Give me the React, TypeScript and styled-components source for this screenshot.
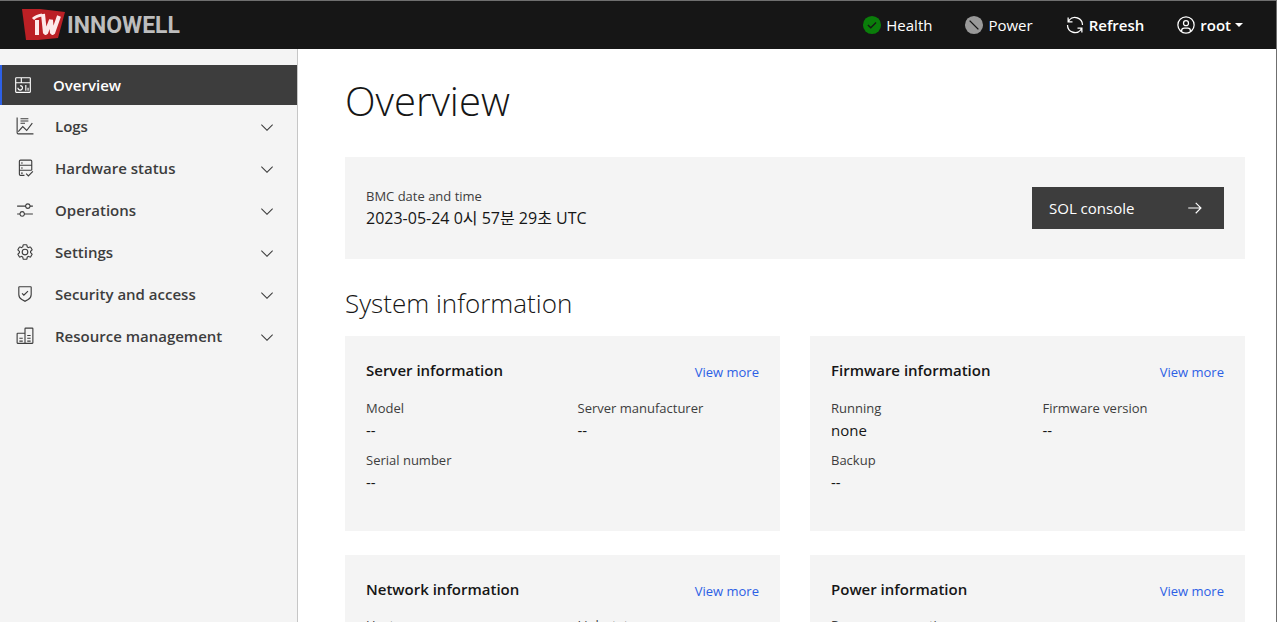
import React from "react";
import styled, { createGlobalStyle, css } from "styled-components";

const GlobalStyle = createGlobalStyle`
  *, *::before, *::after { box-sizing: border-box; }
  html, body, #root { height: 100%; }
  body {
    margin: 0;
    background: #ffffff;
    color: #161616;
    font-family: "Open Sans", "Noto Sans CJK KR", sans-serif;
    font-size: 15px;
    line-height: 22px;
  }
  h1, h2, h3, ul, dl, dd { margin: 0; padding: 0; }
  button { font: inherit; border: 0; cursor: pointer; }
  a { text-decoration: none; }
`;

const Shell = styled.div`
  display: flex;
  flex-direction: column;
  height: 100vh;
  border-top: 1px solid #6f6f6f;
`;

const Header = styled.header`
  display: flex;
  align-items: center;
  justify-content: space-between;
  flex: none;
  height: 48px;
  padding: 0 33px 0 22px;
  background: #161616;
  border-right: 1px solid #6f6f6f;
`;

const Brand = styled.a`
  display: flex;
`;

const HeaderActions = styled.div`
  display: flex;
  align-items: center;
  gap: 32px;
`;

const HeaderButton = styled.button<{ $strong?: boolean }>`
  display: flex;
  align-items: center;
  gap: 4px;
  padding: 0;
  background: none;
  color: #ffffff;
  font-weight: ${(p) => (p.$strong ? 600 : 400)};
`;

const Caret = styled.span`
  border: 4px solid transparent;
  border-top-color: #ffffff;
  border-bottom: 0;
`;

const Body = styled.div`
  display: flex;
  flex: 1;
  min-height: 0;
`;

const Sidebar = styled.nav`
  flex: none;
  width: 298px;
  padding-top: 16px;
  background: #f4f4f4;
  border-right: 1px solid #c6c6c6;
`;

const NavList = styled.ul`
  list-style: none;
`;

const navRow = css`
  display: flex;
  align-items: center;
  gap: 21px;
  width: 100%;
  font-weight: 600;
  text-align: left;
`;

const NavLink = styled.a`
  ${navRow}
  height: 40px;
  padding: 0 24px 0 12px;
  background: #3d3d3d;
  border-left: 2px solid #2d60e5;
  color: #ffffff;
`;

const NavToggle = styled.button`
  ${navRow}
  height: 42px;
  padding: 0 22px 0 16px;
  background: none;
  color: #3d3d3d;
`;

const NavLabel = styled.span`
  flex: 1;
`;

const Main = styled.main`
  flex: 1;
  min-width: 0;
  padding: 27px 31px 24px 47px;
  overflow-y: auto;
  scrollbar-width: none;
  border-right: 1px solid #6f6f6f;
`;

const PageTitle = styled.h1`
  margin-bottom: 31px;
  font-size: 40px;
  line-height: 50px;
  font-weight: 300;
`;

const SectionTitle = styled.h2`
  margin: 27px 0 15px;
  font-size: 26px;
  line-height: 35px;
  font-weight: 300;
`;

const Banner = styled.section`
  display: flex;
  align-items: center;
  justify-content: space-between;
  min-height: 102px;
  padding: 28px 21px;
  background: #f4f4f4;
`;

const BannerDetails = styled.dl`
  padding-bottom: 2px;
`;

const ConsoleButton = styled.button`
  display: flex;
  align-items: center;
  justify-content: space-between;
  width: 192px;
  height: 42px;
  padding: 0 20px 0 17px;
  background: #3d3d3d;
  color: #ffffff;
`;

const CardGrid = styled.div`
  display: grid;
  grid-template-columns: 1fr 1fr;
  gap: 24px 30px;
`;

const Card = styled.section`
  min-height: 195px;
  padding: 22px 21px;
  background: #f4f4f4;
`;

const CardHeader = styled.div<{ $tight?: boolean }>`
  display: flex;
  align-items: flex-start;
  justify-content: space-between;
  margin-bottom: ${(p) => (p.$tight ? 12 : 14)}px;
`;

const CardTitle = styled.h3`
  font-size: 15px;
  line-height: 24px;
  font-weight: 600;
`;

const MoreLink = styled.a`
  padding-top: 3px;
  color: #2d60e5;
  font-size: 13px;
`;

const Details = styled.dl`
  display: grid;
  grid-template-columns: 1fr 1fr;
  gap: 8px 30px;
`;

const Term = styled.dt`
  color: #3d3d3d;
  font-size: 13px;
`;

const Value = styled.dd<{ $large?: boolean }>`
  color: #161616;
  font-size: ${(p) => (p.$large ? 16 : 15)}px;
`;

type IconProps = { size?: number; children: React.ReactNode };

const Icon = ({ size = 18, children }: IconProps) => (
  <svg width={size} height={size} viewBox="0 0 32 32" fill="currentColor" aria-hidden="true">
    {children}
  </svg>
);

const strokeProps = { fill: "none", stroke: "currentColor", strokeWidth: 2 };

const OverviewIcon = () => (
  <Icon>
    <path d="M24 21h2v5h-2zM20 16h2v10h-2zM11 26a5 5 0 0 1-5-5h2a3 3 0 1 0 3-3v-2a5 5 0 0 1 0 10z" />
    <path d="M28 2H4a2 2 0 0 0-2 2v24a2 2 0 0 0 2 2h24a2 2 0 0 0 2-2V4a2 2 0 0 0-2-2zm0 9H14V4h14zM12 4v7H4V4zM4 28V13h24v15z" />
  </Icon>
);

const LogsIcon = () => (
  <Icon>
    <path d="M2 1v27a2 2 0 0 0 2 2h27M4 26l8-9 7 7 10-13" {...strokeProps} />
    <path d="M8 3h14M8 7h14M8 11h8" {...strokeProps} />
  </Icon>
);

const HardwareIcon = () => (
  <Icon>
    <path d="M15 29H8a2 2 0 0 1-2-2V4a2 2 0 0 1 2-2h18a2 2 0 0 1 2 2v16M6 11h22M6 20h22M18 26l4 4 8-8" {...strokeProps} />
    <path d="M9 6h3v2H9zM9 15h3v2H9zM9 24h3v2H9z" />
  </Icon>
);

const OperationsIcon = () => (
  <Icon>
    <path d="M30 8h-4.1a5 5 0 0 0-9.8 0H2v2h14.1a5 5 0 0 0 9.8 0H30zM21 12a3 3 0 1 1 0-6 3 3 0 0 1 0 6zM2 24h4.1a5 5 0 0 0 9.8 0H30v-2H15.900a5 5 0 0 0-9.8 0H2zM11 20a3 3 0 1 1 0 6 3 3 0 0 1 0-6z" />
  </Icon>
);

const SettingsIcon = () => (
  <Icon>
    <path d="M27,16.76c0-.25,0-.5,0-.76s0-.51,0-.77l1.92-1.68A2,2,0,0,0,29.3,11L26.94,7a2,2,0,0,0-1.73-1,2,2,0,0,0-.64.1l-2.43.82a11.35,11.35,0,0,0-1.31-.75l-.51-2.52a2,2,0,0,0-2-1.61H13.64a2,2,0,0,0-2,1.61l-.51,2.52a11.48,11.48,0,0,0-1.32.75L7.43,6.06A2,2,0,0,0,6.79,6,2,2,0,0,0,5.06,7L2.7,11a2,2,0,0,0,.41,2.51L5,15.24c0,.25,0,.5,0,.76s0,.51,0,.77L3.11,18.45A2,2,0,0,0,2.7,21L5.06,25a2,2,0,0,0,1.73,1,2,2,0,0,0,.64-.1l2.43-.82a11.35,11.35,0,0,0,1.31.75l.51,2.52a2,2,0,0,0,2,1.61h4.72a2,2,0,0,0,2-1.61l.51-2.52a11.48,11.48,0,0,0,1.32-.75l2.42.82a2,2,0,0,0,.64.1,2,2,0,0,0,1.73-1L29.3,21a2,2,0,0,0-.41-2.51ZM25.21,24l-3.43-1.16a8.86,8.86,0,0,1-2.71,1.57L18.36,28H13.64l-.71-3.55a9.36,9.36,0,0,1-2.7-1.57L6.79,24,4.43,20l2.72-2.4a8.9,8.9,0,0,1,0-3.13L4.43,12,6.79,8l3.43,1.16a8.86,8.86,0,0,1,2.71-1.57L13.64,4h4.72l.71,3.55a9.36,9.36,0,0,1,2.7,1.57L25.21,8,27.57,12l-2.72,2.4a8.9,8.9,0,0,1,0,3.13L27.57,20Z" />
    <circle cx="16" cy="16" r="5" {...strokeProps} />
  </Icon>
);

const SecurityIcon = () => (
  <Icon>
    <path d="M14 16.590L11.410 14 10 15.410l4 4 8-8L20.590 10z" />
    <path d="M16 30l-6.176-3.293A11 11 0 0 1 4 17V4a2 2 0 0 1 2-2h20a2 2 0 0 1 2 2v13a11 11 0 0 1-5.824 9.707zM6 4v13a9 9 0 0 0 4.766 7.942L16 27.733l5.234-2.791A9 9 0 0 0 26 17V4z" />
  </Icon>
);

const ResourceIcon = () => (
  <Icon>
    <path d="M16 29H3a1 1 0 0 1-1-1V12a1 1 0 0 1 1-1h13M16 29V3a1 1 0 0 1 1-1h12a1 1 0 0 1 1 1v25a1 1 0 0 1-1 1z" {...strokeProps} />
    <path d="M6 20h6M6 25h6M20 15h6M20 20h6M20 25h6" {...strokeProps} />
  </Icon>
);

const ChevronIcon = () => (
  <svg width="16" height="16" viewBox="0 0 16 16" fill="currentColor" aria-hidden="true">
    <path d="M8 13L2 7l.7-.7L8 11.600l5.300-5.300.7.7z" />
  </svg>
);

const HealthIcon = () => (
  <Icon size={20}>
    <circle cx="16" cy="16" r="14.500" fill="#0a7d0a" />
    <path d="M9.500 16l4.500 4.500 8.500-8.500" fill="none" stroke="#161616" strokeWidth="2.200" />
  </Icon>
);

const PowerIcon = () => (
  <Icon size={20}>
    <circle cx="16" cy="16" r="14.500" fill="#999999" />
    <path d="M9 9l14 14" fill="none" stroke="#161616" strokeWidth="2.200" />
  </Icon>
);

const RefreshIcon = () => (
  <Icon size={20}>
    <path d="M12 10H6.780A11 11 0 0 1 27 16h2A13 13 0 0 0 6 7.680V4H4v8h8zM20 22h5.220A11 11 0 0 1 5 16H3a13 13 0 0 0 23 8.320V28h2v-8h-8z" />
  </Icon>
);

const UserIcon = () => (
  <Icon size={20}>
    <path d="M16 8a5 5 0 1 0 5 5 5 5 0 0 0-5-5zm0 8a3 3 0 1 1 3-3 3 3 0 0 1-3 3z" />
    <path d="M16 2a14 14 0 1 0 14 14A14 14 0 0 0 16 2zM10 26.376V25a3 3 0 0 1 3-3h6a3 3 0 0 1 3 3v1.376a11.900 11.900 0 0 1-12 0zm13.992-1.450A5 5 0 0 0 19 20h-6a5 5 0 0 0-4.992 4.926 12 12 0 1 1 15.984 0z" />
  </Icon>
);

const ArrowIcon = () => (
  <Icon>
    <path d="M18 6l-1.430 1.393L24.150 15H4v2h20.150l-7.580 7.573L18 26l10-10z" />
  </Icon>
);

const LogoWord = styled.text`
  font-family: Roboto, sans-serif;
  font-size: 23px;
  font-weight: 700;
  fill: #bdbdbd;
`;

const Logo = () => (
  <svg width="164" height="32" viewBox="0 0 164 32" role="img" aria-label="Innowell">
    <path d="M0 0L18 0 43 3 36 29 16 31 4 31z" fill="#bb2025" />
    <g fill="none" stroke="#fdeaea">
      <path d="M15 11v15" strokeWidth="4" />
      <path d="M11 10q3-3 9-4" strokeWidth="3" />
      <path d="M21 5l2 19h1l5-13 1 13h1l6-17" strokeWidth="4" strokeLinejoin="bevel" />
    </g>
    <LogoWord x="45" y="24">INNOWELL</LogoWord>
  </svg>
);

const navSections = [
  { label: "Logs", Glyph: LogsIcon },
  { label: "Hardware status", Glyph: HardwareIcon },
  { label: "Operations", Glyph: OperationsIcon },
  { label: "Settings", Glyph: SettingsIcon },
  { label: "Security and access", Glyph: SecurityIcon },
  { label: "Resource management", Glyph: ResourceIcon },
];

const cards = [
  {
    title: "Server information",
    details: [["Model", "--"], ["Server manufacturer", "--"], ["Serial number", "--"]],
  },
  {
    title: "Firmware information",
    details: [["Running", "none"], ["Firmware version", "--"], ["Backup", "--"]],
  },
  {
    title: "Network information",
    tight: true,
    details: [["Hostname", "--"], ["Link status", "--"]],
  },
  {
    title: "Power information",
    tight: true,
    details: [["Power consumption", "--"]],
  },
];

export default function App() {
  return (
    <>
      <GlobalStyle />
      <Shell>
        <Header>
          <Brand href="#">
            <Logo />
          </Brand>
          <HeaderActions>
            <HeaderButton>
              <HealthIcon />
              Health
            </HeaderButton>
            <HeaderButton>
              <PowerIcon />
              Power
            </HeaderButton>
            <HeaderButton $strong>
              <RefreshIcon />
              Refresh
            </HeaderButton>
            <HeaderButton $strong>
              <UserIcon />
              root
              <Caret />
            </HeaderButton>
          </HeaderActions>
        </Header>
        <Body>
          <Sidebar aria-label="Primary">
            <NavList>
              <li>
                <NavLink href="#" aria-current="page">
                  <OverviewIcon />
                  <NavLabel>Overview</NavLabel>
                </NavLink>
              </li>
              {navSections.map(({ label, Glyph }) => (
                <li key={label}>
                  <NavToggle aria-expanded="false">
                    <Glyph />
                    <NavLabel>{label}</NavLabel>
                    <ChevronIcon />
                  </NavToggle>
                </li>
              ))}
            </NavList>
          </Sidebar>
          <Main>
            <PageTitle>Overview</PageTitle>
            <Banner>
              <BannerDetails>
                <Term>BMC date and time</Term>
                <Value $large>2023-05-24 0시 57분 29초 UTC</Value>
              </BannerDetails>
              <ConsoleButton>
                SOL console
                <ArrowIcon />
              </ConsoleButton>
            </Banner>
            <SectionTitle>System information</SectionTitle>
            <CardGrid>
              {cards.map((card) => (
                <Card key={card.title}>
                  <CardHeader $tight={card.tight}>
                    <CardTitle>{card.title}</CardTitle>
                    <MoreLink href="#">View more</MoreLink>
                  </CardHeader>
                  <Details>
                    {card.details.map(([term, value]) => (
                      <div key={term}>
                        <Term>{term}</Term>
                        <Value>{value}</Value>
                      </div>
                    ))}
                  </Details>
                </Card>
              ))}
            </CardGrid>
          </Main>
        </Body>
      </Shell>
    </>
  );
}
